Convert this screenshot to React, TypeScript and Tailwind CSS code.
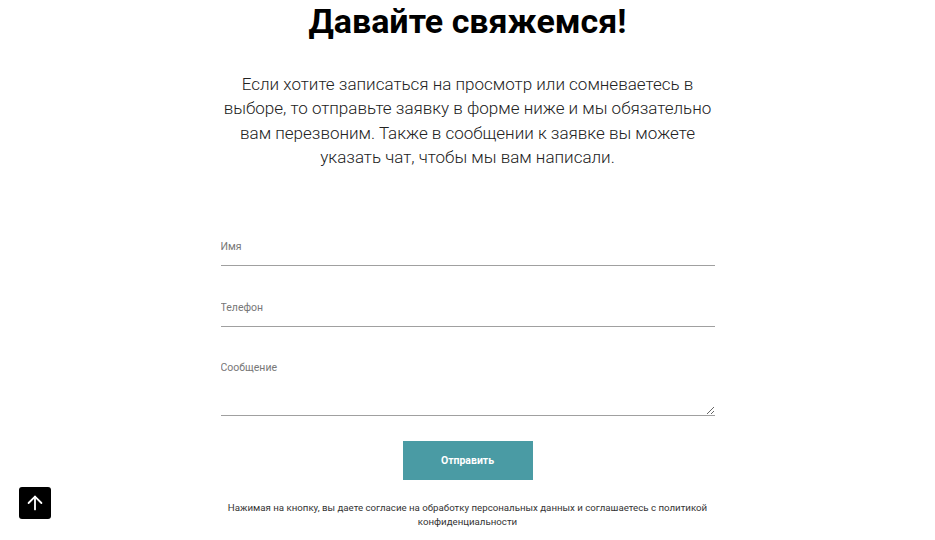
import { ArrowUp } from "lucide-react"

export default function App() {
  return (
    <div className="relative min-h-[540px] bg-white font-['Roboto',sans-serif] text-black">
      <div className="flex flex-col items-center">
        <h1 className="mt-[-4px] text-[34px] font-bold leading-[50px]">Давайте свяжемся!</h1>

        <p className="mt-[26px] w-[490px] text-center text-[17px] font-light leading-[24.3px] text-[#222]">
          Если хотите записаться на просмотр или сомневаетесь в выборе, то отправьте заявку в форме ниже и мы обязательно
          вам перезвоним. Также в сообщении к заявке вы можете указать чат, чтобы мы вам написали.
        </p>

        <form className="mt-[60px] flex w-[494px] flex-col" onSubmit={(e) => e.preventDefault()}>
          <input
            placeholder="Имя"
            className="h-[37px] border-b border-[#a0a0a0] pb-[2px] text-[10.5px] text-[#333] outline-none placeholder:text-[#777]"
          />
          <input
            placeholder="Телефон"
            className="mt-[24px] h-[37px] border-b border-[#a0a0a0] pb-[2px] text-[10.5px] text-[#333] outline-none placeholder:text-[#777]"
          />
          <textarea
            placeholder="Сообщение"
            className="mt-[17px] h-[72px] border-b border-[#a0a0a0] pt-[16px] text-[10.5px] text-[#333] outline-none placeholder:text-[#777]"
          />
          <div className="mt-[25px] flex justify-center">
            <button type="submit" className="h-[39px] w-[130px] bg-[#4a9ba4] text-[10.5px] font-bold text-white">
              Отправить
            </button>
          </div>
        </form>

        <p className="mt-[21px] w-[560px] text-center text-[9.7px] leading-[14px] text-[#333]">
          Нажимая на кнопку, вы даете согласие на обработку персональных данных и соглашаетесь с политикой
          <br />
          конфиденциальности
        </p>
      </div>

      <button className="absolute left-[19px] top-[487px] flex h-[32px] w-[32px] items-center justify-center rounded-[3px] bg-black text-white">
        <ArrowUp size={22} strokeWidth={2} />
      </button>
    </div>
  )
}
